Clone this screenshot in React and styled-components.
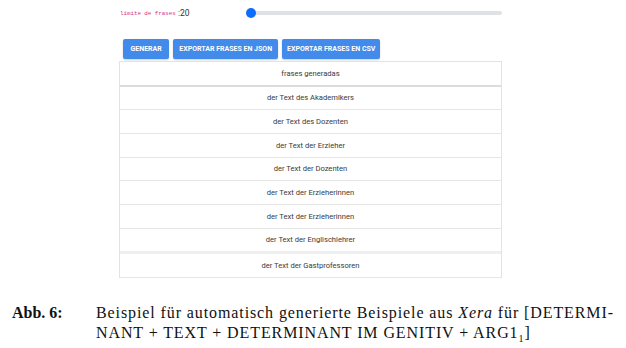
import React from 'react'
import styled, {createGlobalStyle} from 'styled-components'

const phrases = [
  'der Text des Akademikers',
  'der Text des Dozenten',
  'der Text der Erzieher',
  'der Text der Dozenten',
  'der Text der Erzieherinnen',
  'der Text der Erzieherinnen',
  'der Text der Englischlehrer',
  'der Text der Gastprofessoren',
]

const GlobalStyle = createGlobalStyle`
  html, body {
    margin: 0;
    padding: 0;
    background: #fff;
  }
`

const Page = styled.div`
  width: 626px;
  height: 348px;
  overflow: hidden;
  display: flex;
  flex-direction: column;
`

const Shot = styled.div`
  padding: 8px 124px 0 119px;
  display: flex;
  flex-direction: column;
  height: 270px;
  overflow: hidden;
`

const SliderRow = styled.div`
  display: flex;
  align-items: center;
  height: 13px;
  padding-left: 1px;
`

const SliderLabel = styled.span`
  font-family: 'Liberation Mono', monospace;
  font-size: 5.8px;
  color: #d6337f;
  width: 58px;
`

const SliderValue = styled.span`
  font-family: Roboto, sans-serif;
  font-size: 8.5px;
  color: #333;
  width: 68px;
`

const Track = styled.div`
  position: relative;
  flex: 1;
  height: 4px;
  border-radius: 2px;
  background: #dee2e6;
`

const Thumb = styled.div`
  position: absolute;
  left: 0;
  top: -3px;
  width: 10px;
  height: 10px;
  border-radius: 50%;
  background: #0d6efd;
`

const Toolbar = styled.div`
  display: flex;
  gap: 4px;
  margin: 20px 0 2px 4px;
`

const Button = styled.button`
  height: 20px;
  padding: 0 ${p => p.pad}px;
  border: none;
  border-radius: 2px;
  background: #428bea;
  color: #fff;
  font-family: Roboto, sans-serif;
  font-size: 7px;
  font-weight: 700;
  white-space: nowrap;
  box-shadow: 0 1px 2px rgba(0, 0, 0, 0.2);
`

const Table = styled.div`
  border: 1px solid #e3e3e3;
  border-bottom: none;
  display: flex;
  flex-direction: column;
`

const Row = styled.div`
  height: ${p => (p.head ? 23 : 22.7)}px;
  display: flex;
  align-items: center;
  justify-content: center;
  font-family: Roboto, sans-serif;
  font-size: 7.6px;
  color: #3a3a3a;
  border-bottom: ${p => (p.head ? 2 : p.thick ? 3 : 1)}px solid ${p => (p.head ? '#dcdcdc' : p.thick ? '#efefef' : '#e6e6e6')};
`

const Caption = styled.div`
  display: grid;
  grid-template-columns: 84px 1fr;
  padding: 25px 0 0 12px;
  font-family: 'Liberation Serif', serif;
  font-size: 16px;
  line-height: 20px;
  color: #111;
`

const FigNo = styled.span`
  font-weight: 700;
`

const CaptionText = styled.div`
  letter-spacing: 0.9px;
  white-space: nowrap;
`

const Line = styled.div``

const Sub = styled.sub`
  font-size: 10px;
  line-height: 0;
`

export default function App() {
  return (
    <Page>
      <GlobalStyle />
      <Shot>
        <SliderRow>
          <SliderLabel>límite de frases</SliderLabel>
          <SliderValue>:20</SliderValue>
          <Track>
            <Thumb />
          </Track>
        </SliderRow>
        <Toolbar>
          <Button pad={7.5}>GENERAR</Button>
          <Button pad={6}>EXPORTAR FRASES EN JSON</Button>
          <Button pad={5}>EXPORTAR FRASES EN CSV</Button>
        </Toolbar>
        <Table>
          <Row head>frases generadas</Row>
          {phrases.map((p, i) => (
            <Row key={i} thick={i === 6}>{p}</Row>
          ))}
        </Table>
      </Shot>
      <Caption>
        <FigNo>Abb. 6:</FigNo>
        <CaptionText>
          <Line>Beispiel für automatisch generierte Beispiele aus <i>Xera</i> für [DETERMI-</Line>
          <Line>NANT + TEXT + DETERMINANT IM GENITIV + ARG1<Sub>1</Sub>]</Line>
        </CaptionText>
      </Caption>
    </Page>
  )
}
